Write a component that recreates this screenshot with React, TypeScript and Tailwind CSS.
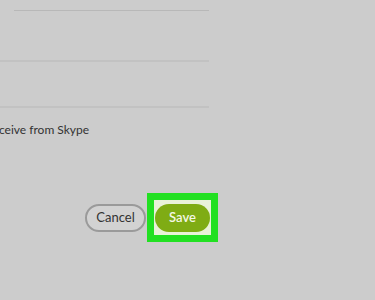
import React from 'react';

const App: React.FC = () => {
  return (
    <div
      className="w-[375px] h-[300px] bg-[#cccccc] overflow-hidden"
      style={{ fontFamily: 'Lato, "Liberation Sans", sans-serif' }}
    >
      <div className="w-[209px]">
        {/* 設定項目の区切り線 */}
        <div className="h-[11px] ml-[14px] border-b border-[#b8b8b8]" />
        <div className="h-[51px] border-b-2 border-[#c2c2c2]" />
        <div className="h-[46px] border-b-2 border-[#c2c2c2]" />
      </div>

      <div className="mt-[14px] text-[12px] leading-[16px] text-[#333333] -ml-[1px]">
        ceive from Skype
      </div>

      {/* ボタン */}
      <div className="mt-[55px] flex items-center">
        <button className="ml-[85px] w-[61px] h-[28px] rounded-full border-2 border-[#9a9a9a] bg-[#d2d2d2] text-[13px] text-[#333333]">
          Cancel
        </button>
        <div className="ml-[1px] p-[7px] bg-[#22e022] flex">
          <div className="w-[57px] h-[35px] bg-[#e9f2d9] flex items-center justify-center px-[1px]">
            <button className="w-[55px] h-[28px] rounded-full bg-[#7fac14] text-[13px] font-semibold text-[#f3f7e4]">
              Save
            </button>
          </div>
        </div>
      </div>
    </div>
  );
};

export default App;
